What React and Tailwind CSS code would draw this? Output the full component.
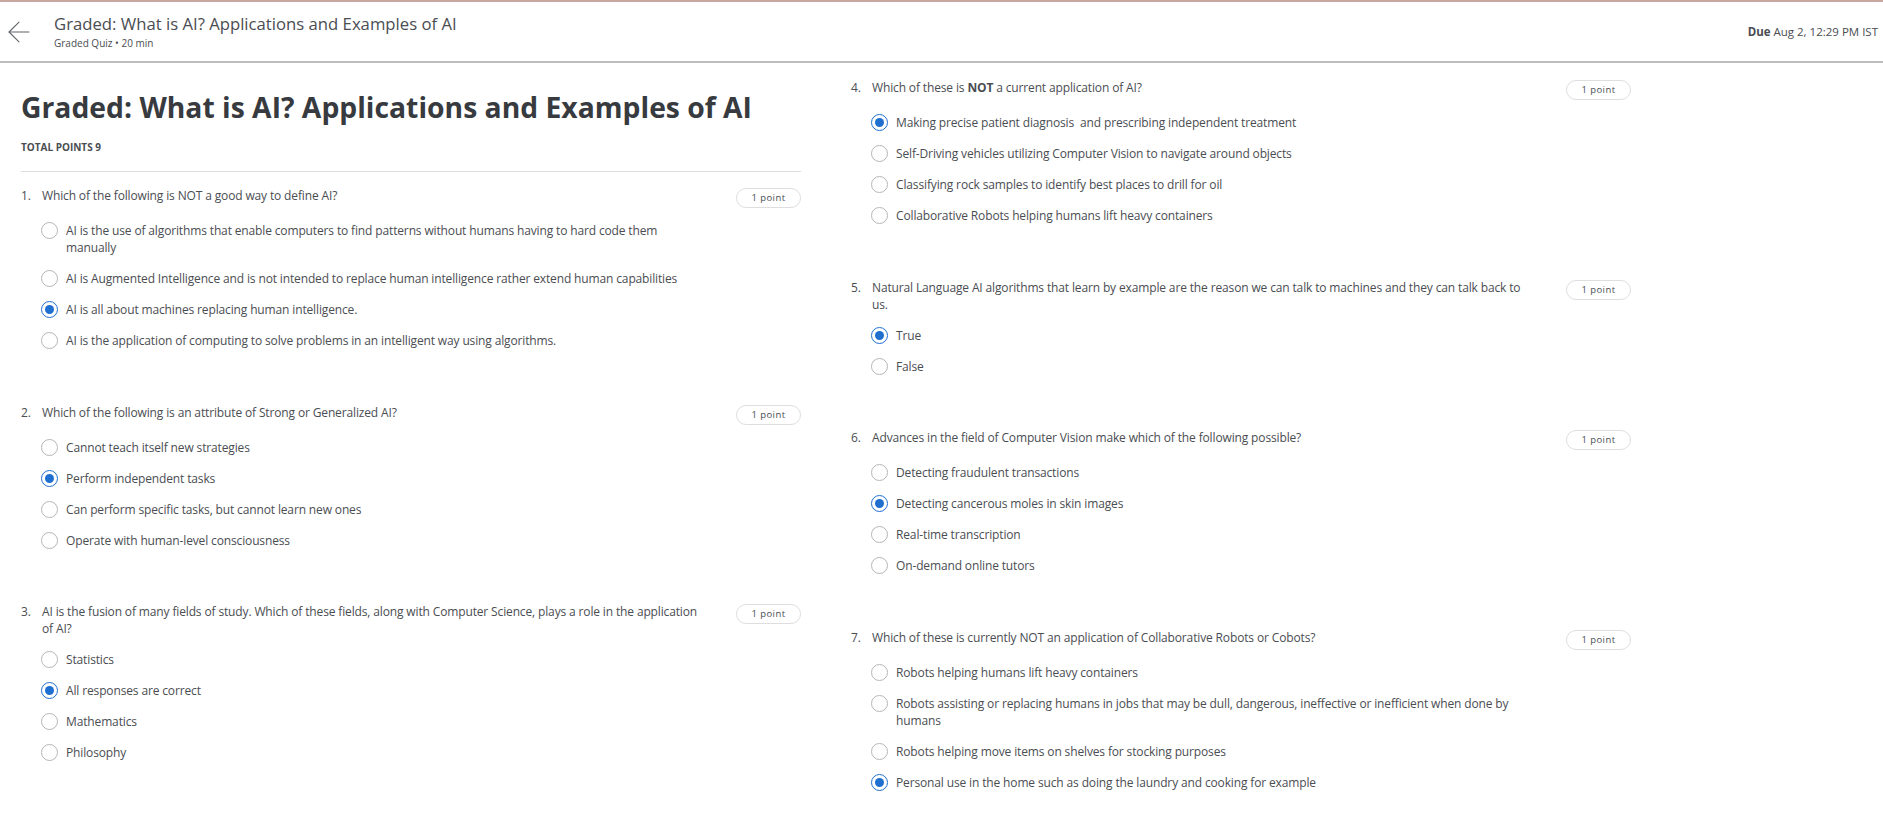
import React from 'react';
import { ArrowLeft } from 'lucide-react';

const leftQuestions = [
  {
    n: 1,
    text: 'Which of the following is NOT a good way to define AI?',
    picked: 2,
    options: [
      'AI is the use of algorithms that enable computers to find patterns without humans having to hard code them manually',
      'AI is Augmented Intelligence and is not intended to replace human intelligence rather extend human capabilities',
      'AI is all about machines replacing human intelligence.',
      'AI is the application of computing to solve problems in an intelligent way using algorithms.',
    ],
  },
  {
    n: 2,
    text: 'Which of the following is an attribute of Strong or Generalized AI?',
    picked: 1,
    options: [
      'Cannot teach itself new strategies',
      'Perform independent tasks',
      'Can perform specific tasks, but cannot learn new ones',
      'Operate with human-level consciousness',
    ],
  },
  {
    n: 3,
    text: 'AI is the fusion of many fields of study. Which of these fields, along with Computer Science, plays a role in the application of AI?',
    picked: 1,
    options: ['Statistics', 'All responses are correct', 'Mathematics', 'Philosophy'],
  },
];

const rightQuestions = [
  {
    n: 4,
    text: (
      <>
        Which of these is <strong className="font-bold">NOT</strong> a current application of AI?
      </>
    ),
    picked: 0,
    options: [
      'Making precise patient diagnosis\u00a0 and prescribing independent treatment',
      'Self-Driving vehicles utilizing Computer Vision to navigate around objects',
      'Classifying rock samples to identify best places to drill for oil',
      'Collaborative Robots helping humans lift heavy containers',
    ],
  },
  {
    n: 5,
    text: 'Natural Language AI algorithms that learn by example are the reason we can talk to machines and they can talk back to us.',
    picked: 0,
    options: ['True', 'False'],
  },
  {
    n: 6,
    text: 'Advances in the field of Computer Vision make which of the following possible?',
    picked: 1,
    options: [
      'Detecting fraudulent transactions',
      'Detecting cancerous moles in skin images',
      'Real-time transcription',
      'On-demand online tutors',
    ],
  },
  {
    n: 7,
    text: 'Which of these is currently NOT an application of Collaborative Robots or Cobots?',
    picked: 3,
    options: [
      'Robots helping humans lift heavy containers',
      'Robots assisting or replacing humans in jobs that may be dull, dangerous, ineffective or inefficient when done by humans',
      'Robots helping move items on shelves for stocking purposes',
      'Personal use in the home such as doing the laundry and cooking for example',
    ],
  },
];

const Radio = ({ checked }) => (
  <span
    className={`flex h-[17px] w-[17px] shrink-0 items-center justify-center rounded-full border-[1.5px] bg-white ${
      checked ? 'border-[#1f6fd0]' : 'border-[#b5b5b5]'
    }`}
  >
    {checked && <span className="h-[9px] w-[9px] rounded-full bg-[#1f6fd0]" />}
  </span>
);

const Question = ({ q }) => (
  <div className="mb-[47.5px]">
    <div className="flex items-start">
      <span className="w-[22px] shrink-0 pl-px">{q.n}.</span>
      <p className="w-[656px] shrink-0">{q.text}</p>
      <span className="mt-px ml-auto flex h-5 w-[65px] shrink-0 items-center justify-center rounded-full border border-[#dedede] text-[9.5px] tracking-[0.4px] leading-none">
        1 point
      </span>
    </div>
    <div className="mt-[7px] pl-[21px]">
      {q.options.map((option, i) => (
        <div key={i} className="flex w-[640px] gap-2 py-[7px]">
          <Radio checked={i === q.picked} />
          <span>{option}</span>
        </div>
      ))}
    </div>
  </div>
);

const App = () => {
  return (
    <div className="h-screen overflow-hidden bg-white font-['Open_Sans',sans-serif] text-[12px] leading-[17px] tracking-[-0.14px] text-[#4a4d52]">
      <header className="flex h-[63px] items-center border-t-2 border-b-2 border-t-[#c8a79f] border-b-[#bdbdbd] pr-[5px]">
        <ArrowLeft className="ml-[2px] h-[34px] w-[34px] text-[#5f6368]" strokeWidth={0.75} />
        <div className="ml-[18px]">
          <h2 className="text-[16.7px] leading-[22px] tracking-normal">
            Graded: What is AI? Applications and Examples of AI
          </h2>
          <p className="mt-[2px] text-[10px] leading-[13px] tracking-normal">Graded Quiz • 20 min</p>
        </div>
        <div className="ml-auto text-[11.5px] tracking-normal">
          <strong className="font-bold">Due</strong> Aug 2, 12:29 PM IST
        </div>
      </header>

      <main className="flex pl-[20px]">
        <section className="w-[781px] pt-[22px]">
          <div className="pl-px">
            <h1 className="text-[28.3px] leading-[44px] font-bold tracking-normal text-[#373a3e]">
              Graded: What is AI? Applications and Examples of AI
            </h1>
            <p className="mt-[11px] text-[10px] leading-[14px] font-bold tracking-normal">TOTAL POINTS 9</p>
            <hr className="mt-[17px] border-[#dedede]" />
          </div>
          <div className="pt-[15px]">
            {leftQuestions.map((q) => (
              <Question key={q.n} q={q} />
            ))}
          </div>
        </section>
        <section className="ml-[49px] w-[781px] pt-[16px]">
          {rightQuestions.map((q) => (
            <Question key={q.n} q={q} />
          ))}
        </section>
      </main>
    </div>
  );
};

export default App;
